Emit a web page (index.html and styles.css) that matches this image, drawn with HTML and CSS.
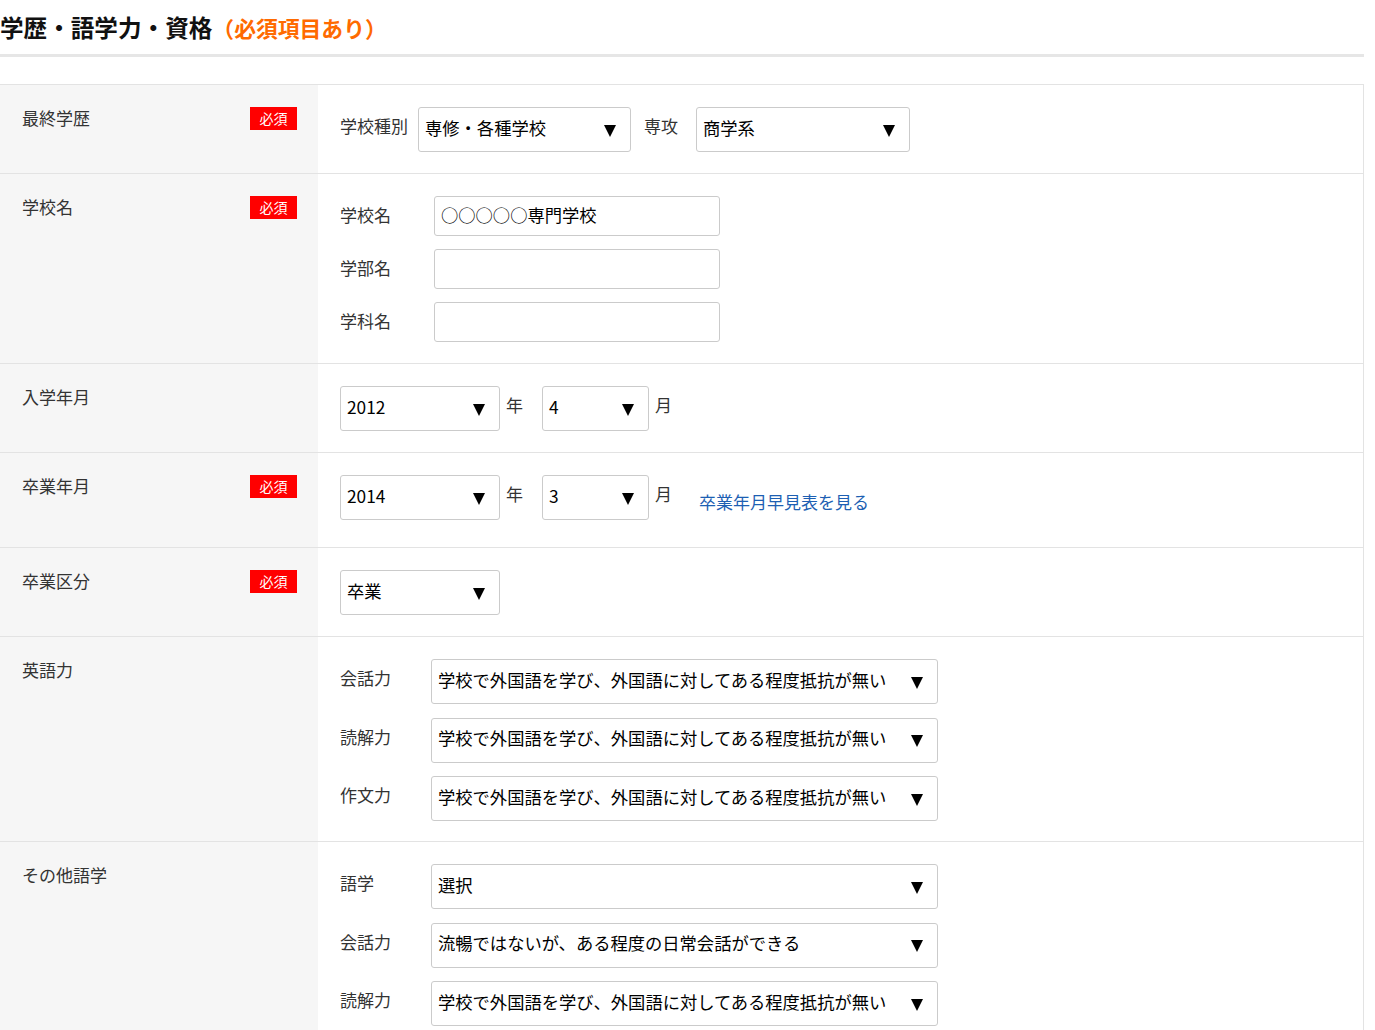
FILE: index.html
```html
<!DOCTYPE html>
<html lang="ja">
<head>
<meta charset="utf-8">
<title>学歴・語学力・資格</title>
<link rel="stylesheet" href="styles.css">
</head>
<body>
<div class="page">
  <h2 class="section-title">学歴・語学力・資格<span class="req-note">（必須項目あり）</span></h2>
  <div class="form-table">
    <div class="row">
      <div class="head"><div class="head-inner"><span>最終学歴</span><span class="badge">必須</span></div></div>
      <div class="body">
        <div class="line">
          <span class="fl fl-kind">学校種別</span>
          <div class="select w213"><span>専修・各種学校</span><i class="arrow"></i></div>
          <span class="fl fl-major">専攻</span>
          <div class="select w214"><span>商学系</span><i class="arrow"></i></div>
        </div>
      </div>
    </div>
    <div class="row">
      <div class="head"><div class="head-inner"><span>学校名</span><span class="badge">必須</span></div></div>
      <div class="body">
        <div class="line"><span class="fl fl-94">学校名</span><div class="input"><span>○○○○○専門学校</span></div></div>
        <div class="line"><span class="fl fl-94">学部名</span><div class="input"></div></div>
        <div class="line"><span class="fl fl-94">学科名</span><div class="input"></div></div>
      </div>
    </div>
    <div class="row">
      <div class="head"><div class="head-inner"><span>入学年月</span></div></div>
      <div class="body">
        <div class="line">
          <div class="select w160"><span>2012</span><i class="arrow"></i></div>
          <span class="fl fl-year">年</span>
          <div class="select w107"><span>4</span><i class="arrow"></i></div>
          <span class="fl fl-month">月</span>
        </div>
      </div>
    </div>
    <div class="row">
      <div class="head"><div class="head-inner"><span>卒業年月</span><span class="badge">必須</span></div></div>
      <div class="body body-link">
        <div class="line">
          <div class="select w160"><span>2014</span><i class="arrow"></i></div>
          <span class="fl fl-year">年</span>
          <div class="select w107"><span>3</span><i class="arrow"></i></div>
          <span class="fl fl-month">月</span>
          <a class="link" href="#">卒業年月早見表を見る</a>
        </div>
      </div>
    </div>
    <div class="row">
      <div class="head"><div class="head-inner"><span>卒業区分</span><span class="badge">必須</span></div></div>
      <div class="body">
        <div class="line">
          <div class="select w160"><span>卒業</span><i class="arrow"></i></div>
        </div>
      </div>
    </div>
    <div class="row">
      <div class="head"><div class="head-inner"><span>英語力</span></div></div>
      <div class="body body-multi">
        <div class="line"><span class="fl fl-91">会話力</span><div class="select w507"><span>学校で外国語を学び、外国語に対してある程度抵抗が無い</span><i class="arrow"></i></div></div>
        <div class="line"><span class="fl fl-91">読解力</span><div class="select w507"><span>学校で外国語を学び、外国語に対してある程度抵抗が無い</span><i class="arrow"></i></div></div>
        <div class="line"><span class="fl fl-91">作文力</span><div class="select w507"><span>学校で外国語を学び、外国語に対してある程度抵抗が無い</span><i class="arrow"></i></div></div>
      </div>
    </div>
    <div class="row">
      <div class="head"><div class="head-inner"><span>その他語学</span></div></div>
      <div class="body body-multi">
        <div class="line"><span class="fl fl-91">語学</span><div class="select w507"><span>選択</span><i class="arrow"></i></div></div>
        <div class="line"><span class="fl fl-91">会話力</span><div class="select w507"><span>流暢ではないが、ある程度の日常会話ができる</span><i class="arrow"></i></div></div>
        <div class="line"><span class="fl fl-91">読解力</span><div class="select w507"><span>学校で外国語を学び、外国語に対してある程度抵抗が無い</span><i class="arrow"></i></div></div>
      </div>
    </div>
  </div>
</div>
</body>
</html>
```

FILE: styles.css
```css
html, body {
  margin: 0;
  padding: 0;
  background: #fff;
}
body {
  font-family: "Noto Sans CJK JP", "Noto Sans", sans-serif;
  color: #333;
  font-size: 17px;
}
.page {
  width: 1364px;
}
.section-title {
  margin: 0 0 27px 0;
  font-size: 23.6px;
  font-weight: 700;
  line-height: 54px;
  height: 54px;
  color: #111;
  border-bottom: 3px solid #e6e6e6;
  white-space: nowrap;
}
.req-note {
  color: #ff6a00;
  font-size: 21.8px;
}
.form-table {
  border-top: 1px solid #e3e3e3;
  border-right: 1px solid #e3e3e3;
}
.row {
  display: flex;
  border-bottom: 1px solid #e3e3e3;
}
.head {
  width: 318px;
  flex: none;
  box-sizing: border-box;
  background: #f6f6f6;
  padding: 22px 21px 0 22px;
}
.head-inner {
  display: flex;
  justify-content: space-between;
  align-items: center;
  height: 23px;
  line-height: 23px;
  color: #333;
}
.head-inner > span:first-child {
  margin-bottom: 3px;
}
.badge {
  display: flex;
  align-items: center;
  justify-content: center;
  width: 47px;
  height: 23px;
  background: #ff0000;
  color: #fff;
  font-size: 14px;
  line-height: 23px;
}
.body {
  flex: 1;
  display: flex;
  flex-direction: column;
  gap: 13px;
  padding: 22px 22px 21px 22px;
}
.body-link {
  padding-bottom: 27px;
}
.body-multi {
  gap: 13.5px;
  padding-bottom: 20px;
}
.line {
  display: flex;
  align-items: center;
}
.fl {
  flex: none;
  line-height: 24px;
  margin-bottom: 7px;
  color: #333;
  white-space: nowrap;
}
.fl-kind { width: 78px; }
.fl-major { margin-left: 13px; margin-right: 18px; }
.fl-94 { width: 94px; margin-bottom: 2px; }
.fl-91 { width: 91px; }
.fl-year { margin-left: 6px; margin-right: 19px; }
.fl-month { margin-left: 6px; }
.select {
  flex: none;
  box-sizing: border-box;
  height: 45px;
  display: flex;
  align-items: center;
  justify-content: space-between;
  border: 1px solid #cbcbcb;
  border-radius: 3px;
  padding: 0 14px 0 6px;
  color: #000;
  background: #fff;
  font-size: 17.3px;
  white-space: nowrap;
}
.select > span {
  line-height: 24px;
  margin-bottom: 4px;
}
.w107 { width: 107px; }
.w160 { width: 160px; }
.w213 { width: 213px; }
.w214 { width: 214px; }
.w507 { width: 507px; }
.arrow {
  display: block;
  width: 0;
  height: 0;
  border-left: 6px solid transparent;
  border-right: 6px solid transparent;
  border-top: 12px solid #000;
  margin-top: 2px;
}
.input {
  box-sizing: border-box;
  width: 286px;
  height: 40px;
  border: 1px solid #cbcbcb;
  border-radius: 3px;
  padding: 0 6px;
  display: flex;
  align-items: center;
  color: #000;
  font-size: 17.3px;
  white-space: nowrap;
}
.input > span {
  line-height: 24px;
  margin-bottom: 3px;
}
.link {
  margin-left: 27px;
  margin-top: 7px;
  line-height: 25px;
  color: #1d5fb3;
  text-decoration: none;
  white-space: nowrap;
}
```
